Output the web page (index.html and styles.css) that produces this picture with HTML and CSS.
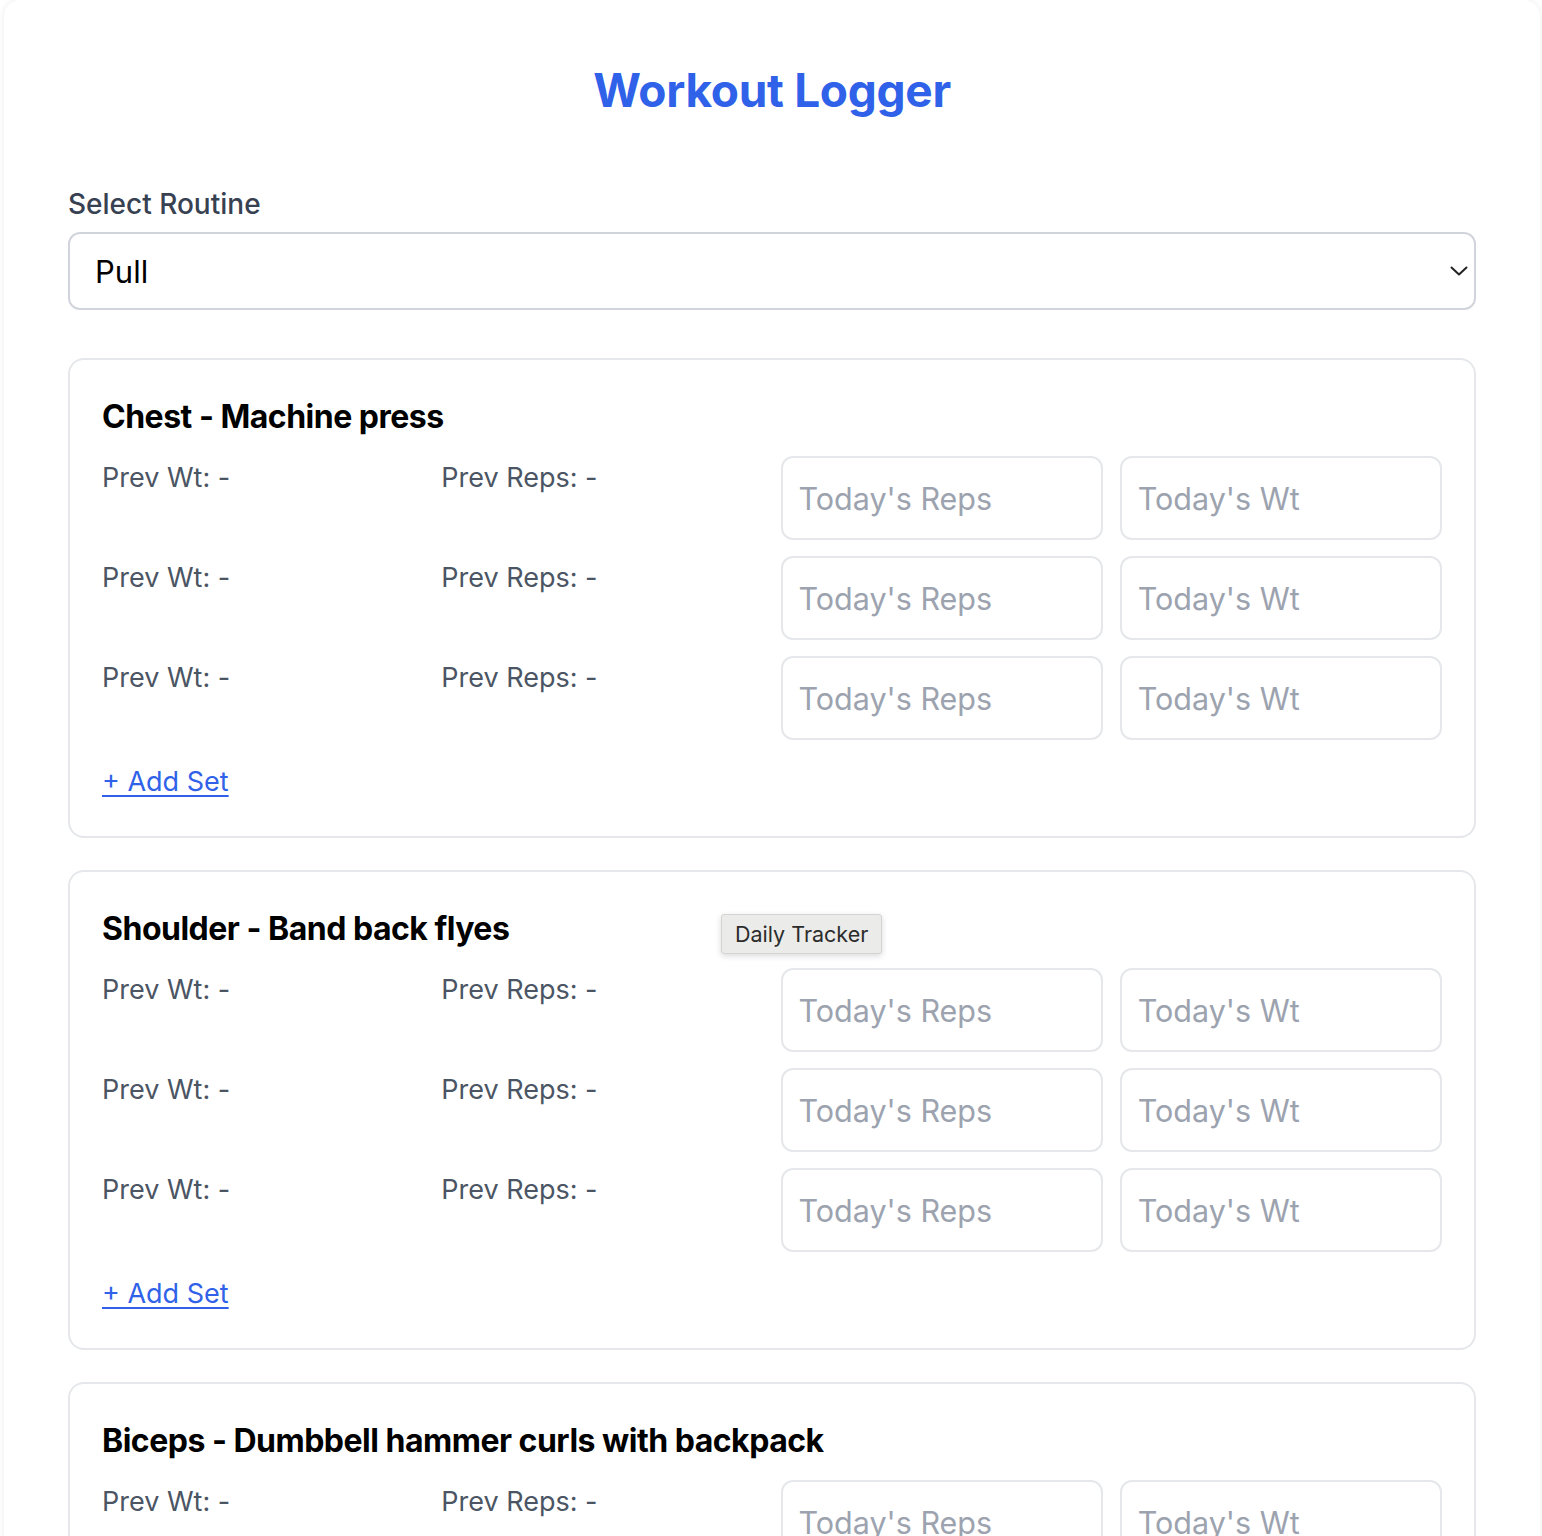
FILE: index.html
```html
<!DOCTYPE html>
<html lang="en">
<head>
<meta charset="utf-8">
<title>Workout Logger</title>
<link rel="stylesheet" href="styles.css">
</head>
<body>
<div class="page">
  <h1 class="title">Workout Logger</h1>

  <label class="field-label" for="routine">Select Routine</label>
  <div class="select">
    <span class="select-value">Pull</span>
    <svg class="chevron" width="18" height="10" viewBox="0 0 18 10" aria-hidden="true"><path d="M1.5 1.5 L9 8.5 L16.5 1.5" fill="none" stroke="#222" stroke-width="2" stroke-linecap="round" stroke-linejoin="round"/></svg>
  </div>

  <section class="card">
    <h2 class="card-title">Chest - Machine press</h2>
    <div class="sets">
      <div class="set"><span class="prev">Prev Wt: -</span><span class="prev">Prev Reps: -</span><input class="inp" placeholder="Today's Reps"><input class="inp" placeholder="Today's Wt"></div>
      <div class="set"><span class="prev">Prev Wt: -</span><span class="prev">Prev Reps: -</span><input class="inp" placeholder="Today's Reps"><input class="inp" placeholder="Today's Wt"></div>
      <div class="set"><span class="prev">Prev Wt: -</span><span class="prev">Prev Reps: -</span><input class="inp" placeholder="Today's Reps"><input class="inp" placeholder="Today's Wt"></div>
    </div>
    <a class="add-set" href="#">+ Add Set</a>
  </section>

  <section class="card">
    <h2 class="card-title">Shoulder - Band back flyes</h2>
    <div class="sets">
      <div class="set"><span class="prev">Prev Wt: -</span><span class="prev">Prev Reps: -</span><input class="inp" placeholder="Today's Reps"><input class="inp" placeholder="Today's Wt"></div>
      <div class="set"><span class="prev">Prev Wt: -</span><span class="prev">Prev Reps: -</span><input class="inp" placeholder="Today's Reps"><input class="inp" placeholder="Today's Wt"></div>
      <div class="set"><span class="prev">Prev Wt: -</span><span class="prev">Prev Reps: -</span><input class="inp" placeholder="Today's Reps"><input class="inp" placeholder="Today's Wt"></div>
    </div>
    <a class="add-set" href="#">+ Add Set</a>
  </section>

  <section class="card">
    <h2 class="card-title">Biceps - Dumbbell hammer curls with backpack</h2>
    <div class="sets">
      <div class="set"><span class="prev">Prev Wt: -</span><span class="prev">Prev Reps: -</span><input class="inp" placeholder="Today's Reps"><input class="inp" placeholder="Today's Wt"></div>
      <div class="set"><span class="prev">Prev Wt: -</span><span class="prev">Prev Reps: -</span><input class="inp" placeholder="Today's Reps"><input class="inp" placeholder="Today's Wt"></div>
      <div class="set"><span class="prev">Prev Wt: -</span><span class="prev">Prev Reps: -</span><input class="inp" placeholder="Today's Reps"><input class="inp" placeholder="Today's Wt"></div>
    </div>
    <a class="add-set" href="#">+ Add Set</a>
  </section>

  <div class="tooltip">Daily Tracker</div>
</div>
</body>
</html>
```

FILE: styles.css
```css
* { box-sizing: border-box; }
html, body { margin: 0; padding: 0; background: #ffffff; }
body {
  font-family: Inter, "Noto Sans", "Liberation Sans", sans-serif;
  color: #111827;
}
.page {
  position: relative;
  width: 1536px;
  margin: 0 0 0 4px;
  padding: 58px 64px 64px;
  background: #ffffff;
  border-radius: 16px;
  box-shadow: 0 0 6px rgba(0, 0, 0, 0.08);
}
.title {
  margin: 0 0 62px;
  text-align: center;
  font-size: 46px;
  line-height: 64px;
  font-weight: 700;
  color: #2f62e8;
  letter-spacing: -0.3px;
}
.field-label {
  display: block;
  font-size: 28px;
  line-height: 40px;
  font-weight: 500;
  color: #374151;
  margin-bottom: 8px;
}
.select {
  display: flex;
  align-items: center;
  justify-content: space-between;
  height: 78px;
  padding: 0 6px 0 25px;
  border: 2px solid #d1d5db;
  border-radius: 12px;
  background: #fff;
  margin-bottom: 48px;
}
.select-value {
  font-size: 31px;
  color: #000;
}
.chevron { display: block; }
.card {
  border: 2px solid #e5e7eb;
  border-radius: 16px;
  padding: 32px 32px 34px;
  margin-bottom: 32px;
  height: 480px;
}
.card-title {
  margin: 0 0 15px;
  padding-top: 1px;
  font-size: 32px;
  line-height: 48px;
  font-weight: 700;
  color: #000;
  letter-spacing: -0.5px;
}
.sets {
  display: flex;
  flex-direction: column;
  gap: 16px;
}
.set {
  display: grid;
  grid-template-columns: repeat(4, 1fr);
  column-gap: 17px;
  align-items: start;
}
.prev {
  padding-top: 2px;
  font-size: 27px;
  line-height: 40px;
  color: #4b5563;
}
.inp {
  width: 100%;
  height: 84px;
  padding: 0 16px;
  border: 2px solid #e5e7eb;
  border-radius: 12px;
  font-family: inherit;
  font-size: 30.5px;
  color: #111827;
  background: #fff;
  outline: none;
}
.inp::placeholder { color: #9ca3af; }
.add-set {
  display: inline-block;
  margin-top: 22px;
  font-size: 27px;
  line-height: 40px;
  color: #2f62e8;
  text-decoration: underline;
  text-underline-offset: 4px;
  text-decoration-thickness: 2px;
}
.tooltip {
  position: absolute;
  left: 717px;
  top: 914px;
  height: 40px;
  padding: 0 13px;
  display: flex;
  align-items: center;
  background: #ebebe9;
  border: 1px solid #d4d4d2;
  border-radius: 3px;
  box-shadow: 0 2px 6px rgba(0, 0, 0, 0.15);
  font-size: 21.5px;
  color: #2b2b2b;
}
```
